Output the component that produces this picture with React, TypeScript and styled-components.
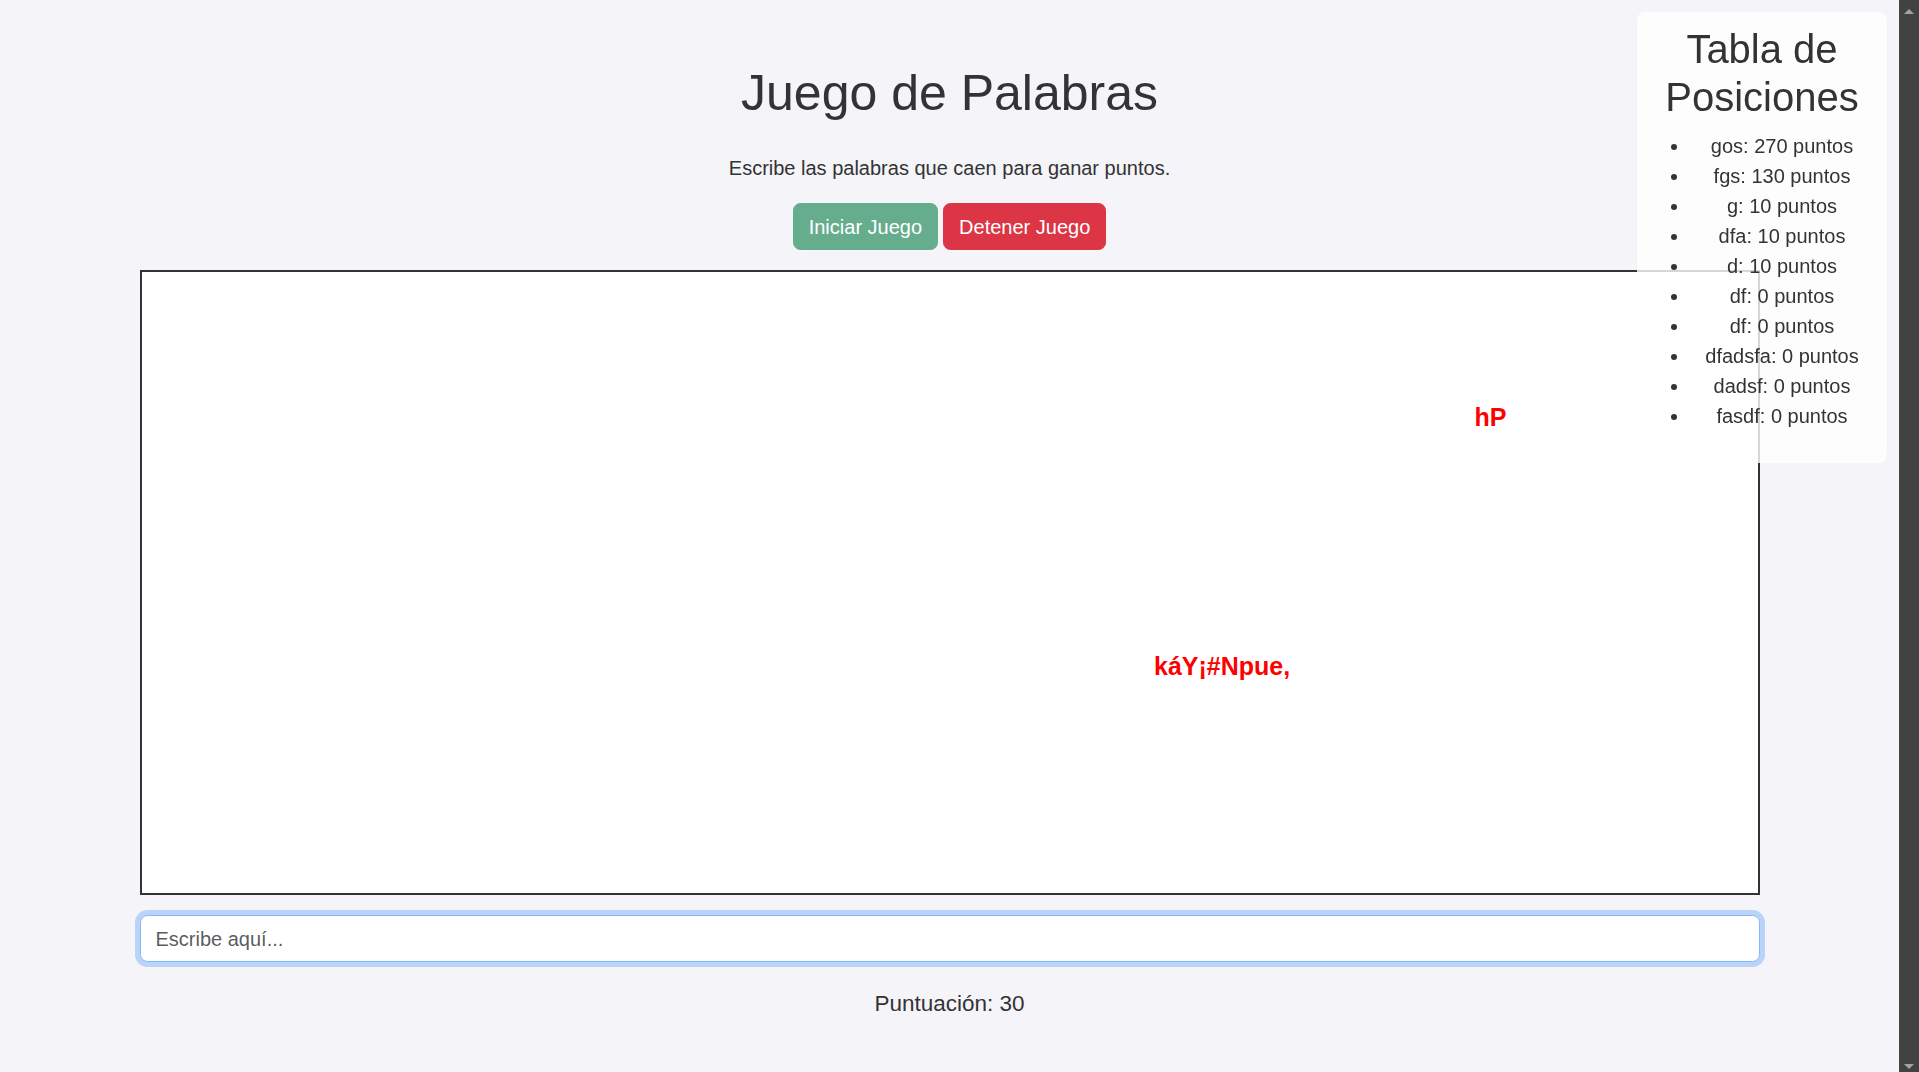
import React from "react";
import styled, { createGlobalStyle } from "styled-components";

const GlobalStyle = createGlobalStyle`
  html {
    overflow: hidden;
  }
  body {
    margin: 0;
    background: #f4f4f9;
    color: #333;
    font-family: "Liberation Sans", Arial, Helvetica, sans-serif;
  }
`;

const Page = styled.div`
  padding: 63px 20px 90px 0;
`;

const Main = styled.main`
  width: 1620px;
  margin: 0 auto;
  display: flex;
  flex-direction: column;
  align-items: center;
`;

const Title = styled.h1`
  margin: 0 0 30px;
  font-size: 50px;
  line-height: 1.2;
  font-weight: 400;
  color: #333;
`;

const Subtitle = styled.p`
  margin: 0 0 20px;
  font-size: 20px;
  line-height: 1.5;
`;

const ButtonRow = styled.div`
  display: flex;
  gap: 5px;
`;

const Button = styled.button<{ $variant: "success" | "danger" }>`
  font-family: inherit;
  font-size: 20px;
  line-height: 1.5;
  padding: 7.5px 15px;
  border: 1.25px solid
    ${(p) => (p.$variant === "success" ? "rgb(102,173,142)" : "#dc3545")};
  border-radius: 7.5px;
  color: #fff;
  background: ${(p) => (p.$variant === "success" ? "rgb(102,173,142)" : "#dc3545")};
  cursor: pointer;
`;

const GameArea = styled.div`
  position: relative;
  margin-top: 20px;
  width: 100%;
  height: 625px;
  box-sizing: border-box;
  border: 2px solid #333;
  background: #fff;
  overflow: hidden;
`;

const FallingWord = styled.span`
  position: absolute;
  font-size: 25px;
  line-height: 25px;
  font-weight: 700;
  color: #ff0000;
  white-space: nowrap;
`;

const WordInput = styled.input`
  margin-top: 20px;
  width: 100%;
  box-sizing: border-box;
  font-family: inherit;
  font-size: 20px;
  line-height: 1.5;
  padding: 7.5px 15px;
  border: 1.25px solid #86b7fe;
  border-radius: 7.5px;
  background: #fff;
  color: #212529;
  outline: none;
  box-shadow: 0 0 0 5px rgba(13, 110, 253, 0.25);
  &::placeholder {
    color: rgba(33, 37, 41, 0.75);
  }
`;

const Score = styled.p`
  margin: 25px 0 0;
  font-size: 22.5px;
  line-height: 1.5;
`;

const Leaderboard = styled.aside`
  position: fixed;
  top: 12px;
  right: 32px;
  width: 250px;
  box-sizing: border-box;
  padding: 12.5px;
  background: rgba(255, 255, 255, 0.8);
  border-radius: 8px;
  z-index: 10;
`;

const BoardTitle = styled.h2`
  margin: 0 0 10px;
  font-size: 40px;
  line-height: 1.2;
  font-weight: 400;
  text-align: center;
  color: #333;
`;

const BoardList = styled.ul`
  margin: 0 0 20px;
  padding-left: 40px;
`;

const BoardItem = styled.li`
  font-size: 20px;
  line-height: 1.5;
  text-align: center;
`;

const ScrollRail = styled.div`
  position: fixed;
  top: 0;
  right: 0;
  width: 20px;
  height: 100vh;
  background: #424242;
  display: flex;
  flex-direction: column;
  justify-content: space-between;
  align-items: center;
  z-index: 20;
`;

const Arrow = styled.span<{ $dir: "up" | "down" }>`
  width: 0;
  height: 0;
  border-left: 5px solid transparent;
  border-right: 5px solid transparent;
  ${(p) =>
    p.$dir === "up"
      ? "border-bottom: 5px solid #a3a3a3; margin-top: 9px;"
      : "border-top: 5px solid #a3a3a3; margin-bottom: 3px;"}
`;

const words = [
  { text: "hP", left: 1333, top: 132.5 },
  { text: "káY¡#Npue,", left: 1012.5, top: 381.8 },
];

const players = [
  ["gos", 270],
  ["fgs", 130],
  ["g", 10],
  ["dfa", 10],
  ["d", 10],
  ["df", 0],
  ["df", 0],
  ["dfadsfa", 0],
  ["dadsf", 0],
  ["fasdf", 0],
] as const;

export default function App() {
  return (
    <>
      <GlobalStyle />
      <Page>
        <Main>
          <Title>Juego de Palabras</Title>
          <Subtitle>Escribe las palabras que caen para ganar puntos.</Subtitle>
          <ButtonRow>
            <Button $variant="success">Iniciar Juego</Button>
            <Button $variant="danger">Detener Juego</Button>
          </ButtonRow>
          <GameArea>
            {words.map((w) => (
              <FallingWord key={w.text} style={{ left: w.left, top: w.top }}>
                {w.text}
              </FallingWord>
            ))}
          </GameArea>
          <WordInput type="text" placeholder="Escribe aquí..." autoFocus />
          <Score>Puntuación: 30</Score>
        </Main>
      </Page>
      <Leaderboard>
        <BoardTitle>Tabla de Posiciones</BoardTitle>
        <BoardList>
          {players.map(([name, pts], i) => (
            <BoardItem key={i}>
              {name}: {pts} puntos
            </BoardItem>
          ))}
        </BoardList>
      </Leaderboard>
      <ScrollRail aria-hidden>
        <Arrow $dir="up" />
        <Arrow $dir="down" />
      </ScrollRail>
    </>
  );
}
